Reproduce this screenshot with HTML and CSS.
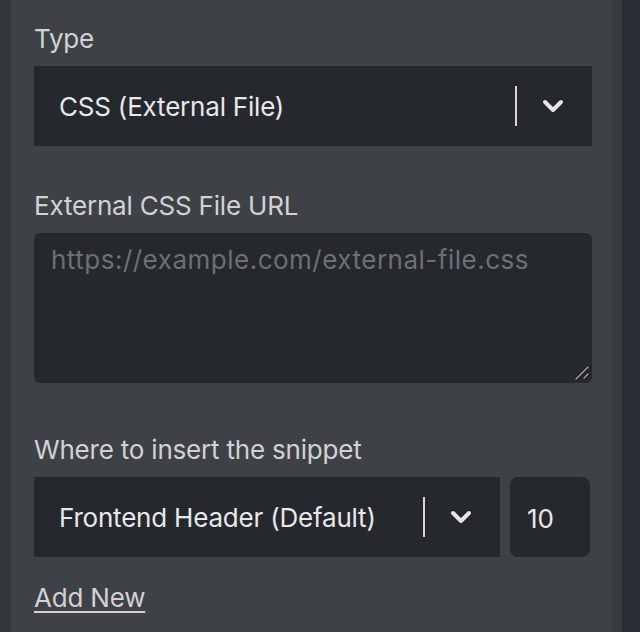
FILE: index.html
```html
<!DOCTYPE html>
<html lang="en">
<head>
<meta charset="utf-8">
<title>Snippet settings</title>
<link rel="stylesheet" href="styles.css">
</head>
<body>
<div class="layout">
  <div class="edge-left"></div>
  <div class="panel">
    <div class="field field-type">
      <label class="label">Type</label>
      <div class="select">
        <span class="select-value">CSS (External File)</span>
        <span class="select-indicators">
          <span class="separator"></span>
          <svg class="chevron" width="22" height="14" viewBox="0 0 22 14"><path d="M3 3 L11 11 L19 3" fill="none" stroke="#e6e6e6" stroke-width="4" stroke-linecap="round" stroke-linejoin="round"/></svg>
        </span>
      </div>
    </div>
    <div class="field field-url">
      <label class="label" for="url">External CSS File URL</label>
      <div class="textarea-wrap">
        <textarea id="url" class="textarea" placeholder="https://example.com/external-file.css"></textarea>
        <svg class="resizer" width="16" height="16" viewBox="0 0 16 16">
          <path d="M2 14 L14 2 M10 13 L14 9" fill="none" stroke="#161719" stroke-width="3" stroke-linecap="round"/>
          <path d="M2 14 L14 2 M10 13 L14 9" fill="none" stroke="#a3a3a3" stroke-width="1.5" stroke-linecap="round"/>
        </svg>
      </div>
    </div>
    <div class="field field-where">
      <label class="label">Where to insert the snippet</label>
      <div class="row">
        <div class="select select-where">
          <span class="select-value">Frontend Header (Default)</span>
          <span class="select-indicators">
            <span class="separator"></span>
            <svg class="chevron" width="22" height="14" viewBox="0 0 22 14"><path d="M3 3 L11 11 L19 3" fill="none" stroke="#e6e6e6" stroke-width="4" stroke-linecap="round" stroke-linejoin="round"/></svg>
          </span>
        </div>
        <input class="number" type="text" value="10">
      </div>
    </div>
    <a class="add-new" href="#">Add New</a>
  </div>
  <div class="edge-right"></div>
  <div class="outside"></div>
</div>
</body>
</html>
```

FILE: styles.css
```css
html, body {
  margin: 0;
  padding: 0;
  height: 100%;
  background: #2b2d35;
}
body {
  font-family: Inter, "Noto Sans", sans-serif;
  font-size: 26px;
  letter-spacing: -0.2px;
  color: #e6e6e6;
}
.layout {
  display: grid;
  grid-template-columns: 11px 601px 10px 1fr;
  height: 632px;
}
.edge-left { background: #33373b; }
.edge-right { background: #383c40; }
.outside { background: #2b2d35; }
.panel {
  background: #3e4246;
  padding: 24px 20px 0 23px;
  display: flex;
  flex-direction: column;
}
.label {
  display: block;
  line-height: 30px;
  color: #d2d2d2;
  margin-bottom: 12px;
}
.field-url { margin-top: 45px; }
.field-where { margin-top: 52px; }
.select {
  height: 80px;
  background: #25282c;
  display: flex;
  align-items: center;
  padding-left: 25px;
  box-sizing: border-box;
}
.select-value {
  flex: 1;
  line-height: 30px;
  padding-top: 2px;
  color: #e8e8e8;
  white-space: nowrap;
}
.select-indicators {
  display: flex;
  align-items: center;
  height: 100%;
}
.separator {
  width: 2px;
  height: 40px;
  background: #d6d6d6;
  margin-right: 25px;
}
.chevron {
  display: block;
  margin-right: 28px;
}
.textarea-wrap {
  position: relative;
}
.textarea {
  display: block;
  box-sizing: border-box;
  width: 100%;
  height: 150px;
  margin: 0;
  border: 0;
  border-radius: 6px;
  background: #25282c;
  color: #e8e8e8;
  font: inherit;
  line-height: 30px;
  padding: 12px 17px;
  resize: none;
  outline: none;
}
.textarea::placeholder {
  color: #6d7074;
  opacity: 1;
  letter-spacing: 0.5px;
}
.resizer {
  position: absolute;
  right: 2px;
  bottom: 2px;
  pointer-events: none;
}
.row {
  display: flex;
  gap: 10px;
}
.select-where { width: 466px; }
.number {
  width: 80px;
  height: 80px;
  box-sizing: border-box;
  margin: 0;
  border: 0;
  border-radius: 8px;
  background: #25282c;
  color: #e8e8e8;
  font: inherit;
  padding: 2px 0 0 17px;
  outline: none;
}
.add-new {
  align-self: flex-start;
  margin-top: 26px;
  line-height: 30px;
  color: #d2d2d2;
  text-decoration: underline;
  text-decoration-thickness: 2px;
  text-underline-offset: 4px;
}
```
